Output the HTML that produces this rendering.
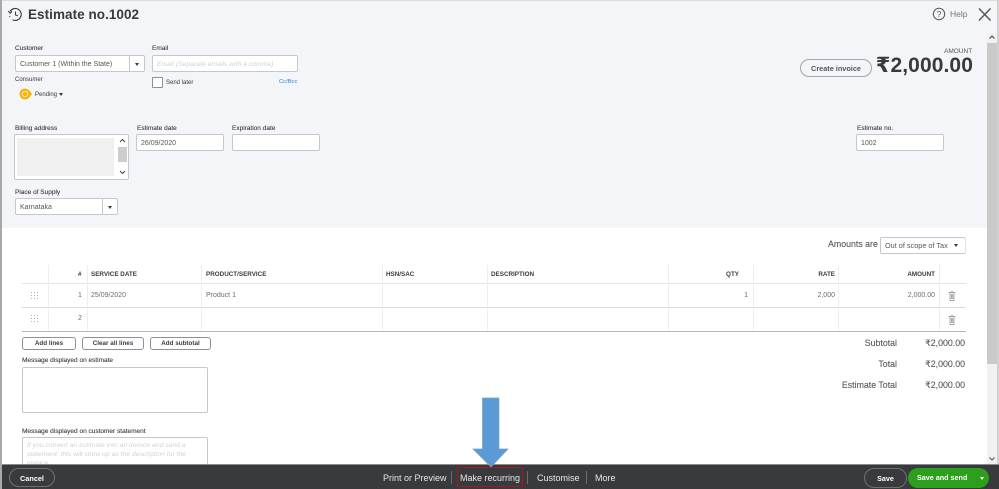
<!DOCTYPE html>
<html><head><meta charset="utf-8">
<style>
html,body{margin:0;padding:0;background:#fff}
#p{position:relative;width:999px;height:489px;overflow:hidden;background:#fff;font-family:"Liberation Sans","DejaVu Sans",sans-serif;color:#393a3d;filter:blur(.3px)}
#p div,#p span.a{position:absolute;white-space:nowrap}
.l{font-size:6.5px;color:#393a3d;line-height:9px;-webkit-text-stroke:.1px #393a3d}
.i{background:#fff;border:1px solid #c4c7cd;border-radius:2px;box-sizing:border-box;font-size:7px;line-height:17px;padding-left:4px;color:#555}
.h{font-size:6.3px;font-weight:bold;line-height:9px;color:#393a3d}
.t{font-size:7px;line-height:9px;color:#6b6c72}
.b{border:1px solid #8d9096;border-radius:3px;box-sizing:border-box;background:#fff;font-size:6.3px;font-weight:bold;text-align:center;line-height:11px;color:#393a3d}
.v{width:1px;background:#eceef1}
.r{height:1px;background:#e3e5e8}
.f{color:#e8e8e8;font-size:9px;line-height:12px}
.s{width:1px;height:13px;background:#6b6c70;top:471px}
.m{font-size:8.8px;line-height:11px;color:#55575c;-webkit-text-stroke:.1px #55575c}
</style></head><body>
<div id="p">
<div style="left:0;top:0;width:999px;height:228px;background:#f4f5f8"></div>
<div style="left:0;top:0;width:999px;height:1px;background:#dcdcdc"></div>
<div style="left:0;top:0;width:2px;height:489px;background:#a9a9a9"></div>

<svg style="position:absolute;left:7px;top:7px" width="16" height="15" viewBox="0 0 16 15"><path d="M3 4.5A6 6 0 1 1 5.5 12.8" fill="none" stroke="#393a3d" stroke-width="1.1"/><path d="M1.2 4.2L3.2 6.4L5 4.2" fill="none" stroke="#393a3d" stroke-width="1"/><path d="M8.5 4.5V8L11 8.8" fill="none" stroke="#393a3d" stroke-width="1"/><path d="M2.5 9L3 10" stroke="#393a3d" stroke-width="1"/></svg>
<div style="left:28px;top:6px;font-size:13.5px;line-height:17px;font-weight:bold;letter-spacing:.05px;color:#393a3d">Estimate no.1002</div>

<svg style="position:absolute;left:932px;top:7px" width="15" height="15" viewBox="0 0 15 15"><circle cx="7" cy="7" r="5.7" fill="none" stroke="#55575c" stroke-width="1"/><text x="7" y="10" font-size="8.5" text-anchor="middle" fill="#55575c" font-family="Liberation Sans">?</text></svg>
<div style="left:950px;top:9px;font-size:8.5px;line-height:11px;color:#777">Help</div>
<svg style="position:absolute;left:977px;top:7px" width="15" height="15" viewBox="0 0 15 15"><path d="M2 1.5L13.5 13.5M13.5 1.5L2 13.5" stroke="#55575c" stroke-width="1.5" fill="none"/></svg>

<div class="l" style="left:15px;top:44px">Customer</div>
<div class="i" style="left:15px;top:55px;width:130px;height:17px">Customer 1 (Within the State)</div>
<div style="left:129px;top:56px;width:1px;height:15px;background:#c4c7cd"></div>
<div style="left:135px;top:63px;width:0;height:0;border:2.5px solid transparent;border-top:3px solid #393a3d"></div>
<div class="l" style="left:152px;top:44px">Email</div>
<div class="i" style="left:152px;top:55px;width:146px;height:17px;color:#d0d2d6;font-style:italic;font-size:6.8px">Email (Separate emails with a comma)</div>
<div class="l" style="left:15px;top:76px;font-size:6px;-webkit-text-stroke:0">Consumer</div>
<div style="left:152px;top:77px;width:11px;height:11px;background:#fff;border:1px solid #8d9096;border-radius:1px;box-sizing:border-box"></div>
<div class="l" style="left:166px;top:79px;font-size:6px;-webkit-text-stroke:0">Send later</div>
<div style="left:279px;top:78px;font-size:5.8px;line-height:8px;color:#2a86c8">Cc/Bcc</div>
<svg style="position:absolute;left:19px;top:88px" width="14" height="13" viewBox="0 0 14 13"><path d="M6 .5C9 .5 11 3 13 6C11 9 9 11.5 6 11.5A5.5 5.5 0 0 1 6 .5Z" fill="#f5b50f"/><circle cx="6" cy="6" r="2.7" fill="none" stroke="#fff" stroke-width=".7"/></svg>
<div class="l" style="left:35px;top:90px;font-size:6px;-webkit-text-stroke:0;line-height:10px">Pending</div>
<div style="left:59px;top:93px;width:0;height:0;border:2.2px solid transparent;border-top:3px solid #393a3d"></div>

<div class="l" style="left:15px;top:124px">Billing address</div>
<div style="left:14px;top:134px;width:115px;height:46px;background:#fff;border:1px solid #c4c7cd;border-radius:2px;box-sizing:border-box"></div>
<div style="left:17px;top:138px;width:97px;height:38px;background:#f0f0f0"></div>
<div style="left:118px;top:147px;width:9px;height:15px;background:#cdcdcd"></div>
<svg style="position:absolute;left:118px;top:138px" width="9" height="41" viewBox="0 0 9 41"><path d="M2 4L4.5 1.5L7 4" fill="none" stroke="#444" stroke-width="1"/><path d="M2 33L4.5 35.5L7 33" fill="none" stroke="#444" stroke-width="1"/></svg>

<div class="l" style="left:137px;top:124px">Estimate date</div>
<div class="i" style="left:136px;top:134px;width:88px;height:17px">26/09/2020</div>
<div class="l" style="left:232px;top:124px">Expiration date</div>
<div class="i" style="left:232px;top:134px;width:88px;height:17px"></div>

<div class="l" style="left:15px;top:188px">Place of Supply</div>
<div class="i" style="left:15px;top:198px;width:103px;height:17px">Karnataka</div>
<div style="left:102px;top:199px;width:1px;height:15px;background:#c4c7cd"></div>
<div style="left:108px;top:206px;width:0;height:0;border:2.5px solid transparent;border-top:3px solid #393a3d"></div>

<div style="left:944px;top:47px;font-size:6.5px;line-height:9px;color:#55575c">AMOUNT</div>
<div style="left:800px;top:59px;width:72px;height:18px;border:1px solid #a4a6ab;border-radius:9px;box-sizing:border-box;font-size:7.3px;font-weight:bold;text-align:center;line-height:17px;color:#55575c">Create invoice</div>
<div style="right:26px;top:54px;font-size:21px;line-height:24px;font-weight:bold;letter-spacing:.1px;color:#393a3d">₹2,000.00</div>
<div class="l" style="left:857px;top:124px">Estimate no.</div>
<div class="i" style="left:856px;top:134px;width:88px;height:17px">1002</div>

<div class="m" style="left:828px;top:239px">Amounts are</div>
<div style="left:880px;top:237px;width:86px;height:17px;background:#fff;border:1px solid #c4c7cd;border-right:1px solid #e0e0e0;border-radius:2px;box-sizing:border-box;font-size:7.3px;line-height:16px;padding-left:4px;color:#55575c">Out of scope of Tax</div>
<div style="left:954px;top:244px;width:0;height:0;border:2.5px solid transparent;border-top:3px solid #393a3d"></div>

<!-- table -->
<div class="r" style="left:22px;top:283px;width:944px"></div>
<div class="r" style="left:22px;top:307px;width:944px;background:#d8dadd"></div>
<div style="left:22px;top:331px;width:944px;height:1px;background:#b5b7bb"></div>
<div class="v" style="left:48px;top:265px;height:66px"></div>
<div class="v" style="left:87px;top:265px;height:66px"></div>
<div class="v" style="left:201px;top:265px;height:66px"></div>
<div class="v" style="left:382px;top:265px;height:66px"></div>
<div class="v" style="left:487px;top:265px;height:66px"></div>
<div class="v" style="left:668px;top:265px;height:66px"></div>
<div class="v" style="left:753px;top:265px;height:66px"></div>
<div class="v" style="left:838px;top:265px;height:66px"></div>
<div class="v" style="left:939px;top:265px;height:66px"></div>

<div class="h" style="left:78px;top:270px">#</div>
<div class="h" style="left:91px;top:270px">SERVICE DATE</div>
<div class="h" style="left:206px;top:270px">PRODUCT/SERVICE</div>
<div class="h" style="left:386px;top:270px">HSN/SAC</div>
<div class="h" style="left:491px;top:270px">DESCRIPTION</div>
<div class="h" style="right:260px;top:270px">QTY</div>
<div class="h" style="right:164px;top:270px">RATE</div>
<div class="h" style="right:64px;top:270px">AMOUNT</div>

<svg style="position:absolute;left:31px;top:292px" width="7" height="7" viewBox="0 0 7 7" fill="#b0b2b6"><path d="M0 0h1v1H0zM3 0h1v1H3zM6 0h1v1H6zM0 3h1v1H0zM3 3h1v1H3zM6 3h1v1H6zM0 6h1v1H0zM3 6h1v1H3zM6 6h1v1H6z"/></svg>
<svg style="position:absolute;left:31px;top:315px" width="7" height="7" viewBox="0 0 7 7" fill="#b0b2b6"><path d="M0 0h1v1H0zM3 0h1v1H3zM6 0h1v1H6zM0 3h1v1H0zM3 3h1v1H3zM6 3h1v1H6zM0 6h1v1H0zM3 6h1v1H3zM6 6h1v1H6z"/></svg>
<div class="t" style="left:78px;top:291px">1</div>
<div class="t" style="left:78px;top:314px">2</div>
<div class="t" style="left:91px;top:291px">25/09/2020</div>
<div class="t" style="left:206px;top:291px">Product 1</div>
<div class="t" style="right:251px;top:291px">1</div>
<div class="t" style="right:164px;top:291px">2,000</div>
<div class="t" style="right:64px;top:291px">2,000.00</div>
<svg style="position:absolute;left:948px;top:291px" width="8" height="10" viewBox="0 0 8 10" fill="none" stroke="#8d9096" stroke-width=".8"><path d="M.5 1.5h7M2 1.5v8h4v-8M3 .5h2M3.4 3v5M4.7 3v5"/></svg>
<svg style="position:absolute;left:948px;top:315px" width="8" height="10" viewBox="0 0 8 10" fill="none" stroke="#8d9096" stroke-width=".8"><path d="M.5 1.5h7M2 1.5v8h4v-8M3 .5h2M3.4 3v5M4.7 3v5"/></svg>

<div class="b" style="left:22px;top:337px;width:54px;height:13px">Add lines</div>
<div class="b" style="left:82px;top:337px;width:62px;height:13px">Clear all lines</div>
<div class="b" style="left:150px;top:337px;width:61px;height:13px">Add subtotal</div>

<div class="m" style="right:102px;top:338px">Subtotal</div>
<div class="m" style="right:34px;top:338px">₹2,000.00</div>
<div class="m" style="right:102px;top:359px">Total</div>
<div class="m" style="right:34px;top:359px">₹2,000.00</div>
<div class="m" style="right:102px;top:380px">Estimate Total</div>
<div class="m" style="right:34px;top:380px">₹2,000.00</div>

<div class="l" style="left:22px;top:356px">Message displayed on estimate</div>
<div style="left:22px;top:367px;width:186px;height:46px;background:#fff;border:1px solid #c4c7cd;border-radius:2px;box-sizing:border-box"></div>
<div class="l" style="left:22px;top:427px">Message displayed on customer statement</div>
<div style="left:22px;top:437px;width:186px;height:40px;background:#fff;border:1px solid #c4c7cd;border-radius:2px;box-sizing:border-box;padding:3px 4px;font-size:6.8px;line-height:9px;font-style:italic;color:#d0d2d6;white-space:normal">If you convert an estimate into an invoice and send a<br>statement, this will show up as the description for the<br>invoice.</div>

<!-- scrollbar -->
<div style="left:987px;top:33px;width:10px;height:431px;background:#f1f1f1"></div>
<div style="left:987px;top:43px;width:10px;height:321px;background:#c9c9c9"></div>
<svg style="position:absolute;left:987px;top:33px" width="10" height="10" viewBox="0 0 10 10"><path d="M2.5 5.5L5 3L7.5 5.5" fill="none" stroke="#444" stroke-width="1.1"/></svg>
<svg style="position:absolute;left:987px;top:454px" width="10" height="10" viewBox="0 0 10 10"><path d="M2.5 3.5L5 6L7.5 3.5" fill="none" stroke="#555" stroke-width="1.1"/></svg>
<div style="left:997px;top:0;width:2px;height:489px;background:#d0d0d0"></div>

<!-- footer -->
<div style="left:2px;top:464px;width:997px;height:25px;background:#393a3d"></div>
<div style="left:2px;top:464px;width:997px;height:1px;background:#8a8b8d"></div>
<div style="left:9px;top:468px;width:46px;height:19px;border:1px solid #6f7074;border-radius:10px;box-sizing:border-box;color:#fff;font-size:7.3px;font-weight:bold;text-align:center;line-height:19px">Cancel</div>

<div class="f" style="left:383px;top:472px">Print or Preview</div>
<div class="s" style="left:451px"></div>
<div style="left:457px;top:467px;width:66px;height:20px;border:1px solid #a8171c;box-sizing:border-box"></div>
<div class="f" style="left:460px;top:472px">Make recurring</div>
<div class="s" style="left:527px"></div>
<div class="f" style="left:537px;top:472px">Customise</div>
<div class="s" style="left:586px"></div>
<div class="f" style="left:595px;top:472px">More</div>

<div style="left:864px;top:468px;width:43px;height:20px;border:1px solid #6f7074;border-radius:10px;box-sizing:border-box;color:#fff;font-size:7.2px;font-weight:bold;text-align:center;line-height:20px">Save</div>
<div style="left:908px;top:468px;width:81px;height:20px;background:#2ca01c;border-radius:10px;color:#fff;font-size:7.2px;font-weight:bold;line-height:20px;text-indent:9px">Save and send</div>
<div style="left:980px;top:477px;width:0;height:0;border:2.5px solid transparent;border-top:3px solid #fff"></div>

<!-- arrow -->
<svg style="position:absolute;left:472px;top:396px" width="38" height="72" viewBox="0 0 38 72"><path d="M10.5 2H27V53H36L19 71L1 53H10.5Z" fill="#5b9bd5" stroke="#7f9fc0" stroke-width=".7"/></svg>
</div>
</body></html>
